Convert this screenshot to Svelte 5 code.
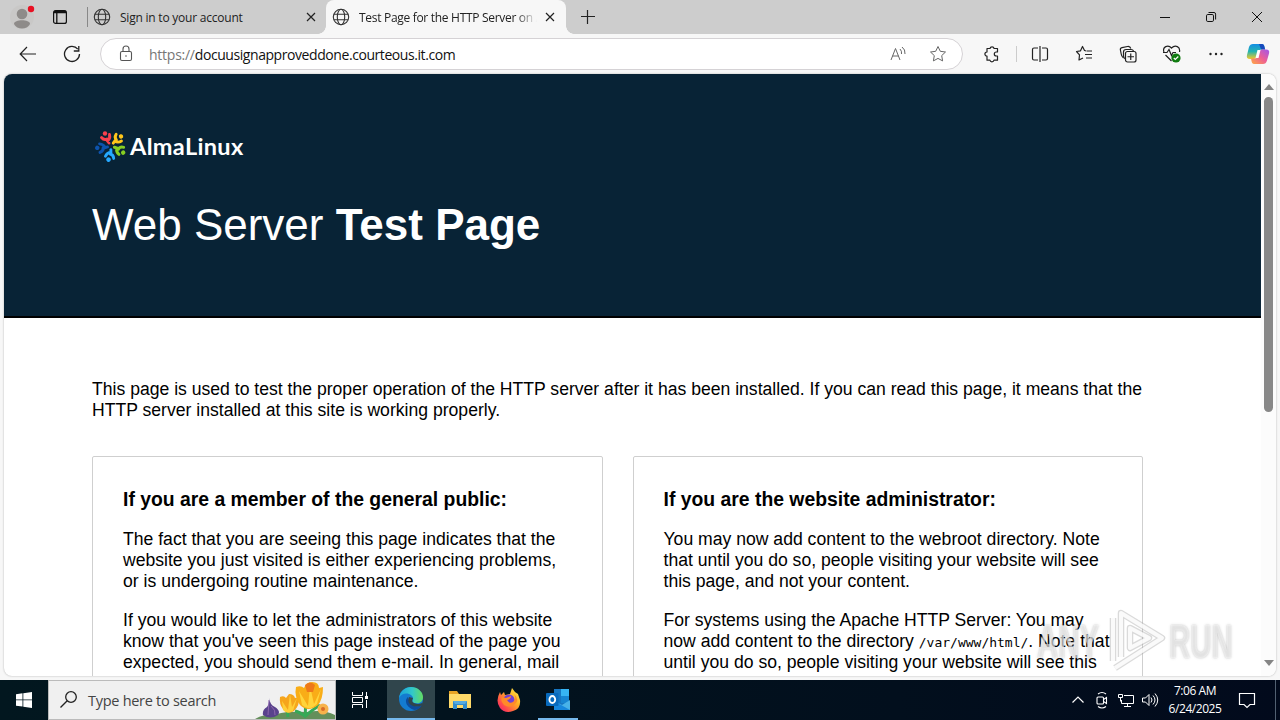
<script lang="ts">
	const tabs = [
		{ title: 'Sign in to your account', active: false },
		{ title: 'Test Page for the HTTP Server on AlmaLinux', active: true }
	];

	// One figure of the AlmaLinux mark, rotated around the centre
	const petals = [
		{ color: '#f7404d', angle: 0 },
		{ color: '#ffc61a', angle: 72 },
		{ color: '#86ce22', angle: 144 },
		{ color: '#25a8ff', angle: 216 },
		{ color: '#0d53ad', angle: 288 }
	];
</script>

<div class="screen">
	<header class="tab-strip">
		<svg class="profile" width="28" height="28" viewBox="0 0 28 28">
			<circle cx="14" cy="14" r="12" fill="#c9c8c7" />
			<circle cx="14" cy="11" r="5.3" fill="#8e8b89" />
			<path d="M6 21c0-5 16-5 16 0-3 6-13 6-16 0z" fill="#8e8b89" />
			<circle cx="23" cy="6" r="3.2" fill="#e81123" />
		</svg>
		<svg class="workspaces" width="16" height="16" viewBox="0 0 16 16" fill="none" stroke="#111">
			<rect x="1.6" y="1.6" width="12.8" height="12.8" rx="2" stroke-width="1.2" />
			<path d="M2 3h12" stroke-width="2.5" />
			<path d="M4.8 4v10" stroke-width="1.3" />
		</svg>
		<i class="strip-divider"></i>
		{#each tabs as tab}
			<div class="tab" class:active={tab.active}>
				<svg width="18" height="18" viewBox="0 0 18 18" fill="none" stroke="#333" stroke-width="1.1">
					<circle cx="9" cy="9" r="7.7" />
					<ellipse cx="9" cy="9" rx="3.7" ry="7.7" />
					<path d="M2 6.2h14M2 11.8h14" />
				</svg>
				<span class="tab-title">{tab.title}</span>
				<svg width="10" height="10" viewBox="0 0 10 10" stroke="#222" stroke-width="1.2">
					<path d="M1 1l8 8M9 1L1 9" />
				</svg>
			</div>
		{/each}
		<svg class="new-tab" width="14" height="14" viewBox="0 0 14 14" stroke="#222" stroke-width="1.2">
			<path d="M6.5 0v14M0 6.5h14" />
		</svg>
		<div class="window-buttons">
			<svg width="12" height="12" viewBox="0 0 12 12" stroke="#111"><path d="M1 6.5h10" /></svg>
			<svg width="12" height="12" viewBox="0 0 12 12" fill="none" stroke="#111">
				<rect x="1.5" y="3.5" width="7" height="7" rx="1.3" />
				<path d="M3.5 1.5H9a1.6 1.6 0 0 1 1.6 1.6V8.5" />
			</svg>
			<svg width="12" height="12" viewBox="0 0 12 12" stroke="#111"><path d="M1 1l10 10M11 1L1 11" /></svg>
		</div>
	</header>

	<div class="toolbar">
		<svg class="back" width="18" height="18" viewBox="0 0 18 18" fill="none" stroke="#222" stroke-width="1.2">
			<path d="M17 9H1.5M8 2L1.2 9 8 16" />
		</svg>
		<svg class="reload" width="18" height="18" viewBox="0 0 18 18" fill="none" stroke="#222" stroke-width="1.3">
			<path d="M16.5 9A7.5 7.5 0 1 1 14.8 4.2M15.8 1v5h-5" />
		</svg>
		<div class="address">
			<svg width="16" height="18" viewBox="0 0 16 18" fill="none" stroke="#555" stroke-width="1.1">
				<rect x="2.5" y="6.5" width="11" height="9" rx="1.5" />
				<path d="M5 6.5V4a3 3 0 0 1 6 0v2.5" />
				<circle cx="8" cy="11" r=".8" fill="#555" stroke="none" />
			</svg>
			<span class="url"><span>https://</span>docuusignapproveddone.courteous.it.com</span>
			<svg class="read" width="18" height="16" viewBox="0 0 18 16" fill="none" stroke="#666">
				<path d="M2 14L6.500 2.500 11 14M3.500 10h6M11 3q2 2 1.500 5M13 1q3.500 2.500 3 7" />
			</svg>
			<svg class="star" width="18" height="18" viewBox="0 0 18 18" fill="none" stroke="#666" stroke-linejoin="round">
				<path d="M9 1.5l2.3 4.8 5.2.7-3.8 3.6.9 5.3L9 13.4l-4.6 2.5.9-5.3L1.5 7l5.2-.7z" />
			</svg>
		</div>
		<div class="actions">
			<svg width="18" height="18" viewBox="0 0 18 18" fill="none" stroke="#222" stroke-width="1.2" stroke-linejoin="round">
				<path d="M4 3.5h3a2.1 2.1 0 0 1 4.1 0h3.4V7h-1.2a2 2 0 0 0 0 4h1.2v4.2H11a2.1 2.1 0 0 1-4.1 0H4v-4a2.1 2.1 0 0 1 0-4.2z" />
			</svg>
			<i class="tool-divider"></i>
			<svg width="18" height="18" viewBox="0 0 18 18" fill="none" stroke="#222" stroke-width="1.2">
				<path d="M7 3H3Q1.5 3 1.5 4.5v9Q1.5 15 3 15h4M11 3h4q1.5 0 1.5 1.5v9Q16.5 15 15 15h-4M9 1v16" />
			</svg>
			<svg width="18" height="18" viewBox="0 0 18 18" fill="none" stroke="#222" stroke-width="1.2" stroke-linejoin="round">
				<path d="M11 5.8L9.500 5.500 7.500 1.500 5.500 5.800 1.500 6.500 4.500 9.800 4 15l4-2M11.500 6H17M10 9.500h7M11 13h6" />
			</svg>
			<svg width="18" height="18" viewBox="0 0 18 18" fill="none" stroke="#222" stroke-width="1.2">
				<path d="M4.500 13Q2.500 11.500 2.200 9L1.400 5Q1 3 3 2.600L8.500 1.500Q11 1 11.800 3.500" />
				<path d="M6.500 14Q4.500 13 4.500 11V7Q4.500 4.500 7 4.500h5q2 0 2.500 1.500" />
				<rect x="6.500" y="6.500" width="10.500" height="10.500" rx="2" fill="#f7f7f7" />
				<path d="M11.750 8.500v6.500M8.500 11.750h6.500" />
			</svg>
			<svg width="18" height="20" viewBox="1 0 18 20" fill="none" stroke="#222" stroke-width="1.2">
				<path d="M2 8C0 3 6 0 9.500 4c4-4 9-1 8 4M3.500 11l6 6M1 8.500h4l2-3 2.500 6 1.500-3h3" />
				<circle cx="14" cy="14" r="4.600" fill="#107c10" stroke="none" />
				<path d="M11.800 14l1.500 1.500 3-3" stroke="#fff" />
			</svg>
			<svg width="18" height="16" viewBox="-1 0 18 16" fill="#222">
				<circle cx="2.500" cy="8" r="1.200" /><circle cx="8" cy="8" r="1.200" /><circle cx="13.500" cy="8" r="1.200" />
			</svg>
			<svg class="copilot" width="24" height="22" viewBox="0 0 24 22">
				<defs>
					<linearGradient id="cool" x1="0" y1="0" x2="0" y2="1">
						<stop offset="0" stop-color="#128de5" /><stop offset=".5" stop-color="#25b5b0" /><stop offset="1" stop-color="#f5c928" />
					</linearGradient>
					<linearGradient id="warm" x1="1" y1="0" x2="0" y2="1">
						<stop offset="0" stop-color="#a056ec" /><stop offset=".5" stop-color="#ee5f94" /><stop offset="1" stop-color="#ffab42" />
					</linearGradient>
				</defs>
				<path d="M7 1h9q2 0 2.500 3l.6 2.500h-4q-2 0-2.700 2.500l-1.200 4Q10.300 16 8 16H4Q0 16 1 12L3 4Q4 1 7 1z" fill="url(#cool)" />
				<path d="M13 1h3q2 0 2.500 3l.6 2.500h-4Z" fill="#174abc" />
				<path d="M17 21H8q-2 0-2.500-3L5 15.500h4q2 0 2.700-2.500l1.100-4Q13.700 6.500 16 6.500h4q4 0 3 4l-2 7Q20 21 17 21z" fill="url(#warm)" />
				<path d="M11.500 7h3l-2 8h-3z" fill="#fff" />
			</svg>
		</div>
	</div>

	<div class="viewport">
		<main class="page">
			<section class="hero">
				<div class="logo">
					<svg width="32" height="32" viewBox="0 0 32 32">
						{#each petals as petal}
							<g transform="rotate({petal.angle} 16 16)" stroke={petal.color} fill="none" stroke-linecap="round">
								<path d="M6.500 7.500q2.500 3 5.500 1.500M14.500 4.500q1 4-2 6.500l1.500 2" stroke-width="2.900" />
								<circle cx="10" cy="3.500" r="2.200" fill={petal.color} stroke="none" />
							</g>
						{/each}
					</svg>
					<span>AlmaLinux</span>
				</div>
				<h1>Web Server <strong>Test Page</strong></h1>
			</section>
			<section class="content">
				<p class="intro">
					This page is used to test the proper operation of the HTTP server after it has been installed. If you can read this page, it means that the<br />
					HTTP server installed at this site is working properly.
				</p>
				<div class="columns">
					<article>
						<h2>If you are a member of the general public:</h2>
						<p>
							The fact that you are seeing this page indicates that the<br />
							website you just visited is either experiencing problems,<br />
							or is undergoing routine maintenance.
						</p>
						<p>
							If you would like to let the administrators of this website<br />
							know that you've seen this page instead of the page you<br />
							expected, you should send them e-mail. In general, mail
						</p>
					</article>
					<article>
						<h2>If you are the website administrator:</h2>
						<p>
							You may now add content to the webroot directory. Note<br />
							that until you do so, people visiting your website will see<br />
							this page, and not your content.
						</p>
						<p>
							For systems using the Apache HTTP Server: You may<br />
							now add content to the directory <code>/var/www/html/</code>. Note that<br />
							until you do so, people visiting your website will see this
						</p>
					</article>
				</div>
			</section>
		</main>
		<div class="scrollbar">
			<svg width="10" height="6" viewBox="0 0 10 6"><path d="M5 0l5 6H0z" fill="#858585" /></svg>
			<i class="thumb"></i>
			<svg class="down" width="10" height="6" viewBox="0 0 10 6"><path d="M0 0h10L5 6z" fill="#858585" /></svg>
		</div>
	</div>

	<footer class="taskbar">
		<svg class="start" width="16" height="16" viewBox="0 0 16 16" fill="#fff">
			<path d="M0 2.200L6.500 1.300v6.200H0zM7.300 1.200L16 0v7.500H7.300zM0 8.300h6.500v6.300L0 13.700zM7.300 8.300H16V16l-8.700-1.200z" />
		</svg>
		<div class="search">
			<svg width="18" height="18" viewBox="0 0 18 18" fill="none" stroke="#222" stroke-width="1.300">
				<circle cx="11" cy="6" r="5.300" /><path d="M7.200 9.800L.5 16.500" />
			</svg>
			<span>Type here to search</span>
			<svg class="flowers" width="80" height="38" viewBox="0 0 80 38">
				<path d="M0 38Q8 33 22 33q10-3 30-2 16-3 28 3v4z" fill="#648f5b" />
				<path d="M33 36q-1-8-2-16M51 36q-2-10 2-20M49 36q8-7 16-12M51 36q-6-5-11-6" fill="none" stroke="#36a957" stroke-width="3" />
				<path d="M14 17q1 7 6 9 6 4 3 8-8 5-15 0-1-5 4-8 3-3 2-9z" fill="#59428c" />
				<path d="M14 19l-1 15M16 25q5 4 4 9" stroke="#8d67ae" fill="none" />
				<path d="M25 16q4-2 6 1l3-4q5 0 6 4l4-1q1 8-5 14-7 4-11-2-4-5-3-12z" fill="#f6a51c" />
				<path d="M27 20l6 9 2-16 2 13 5-9-4 13q-6 4-10-1z" fill="#ffcf38" />
				<path d="M41 6q5-2 8 1 2-6 8-6 7 0 7 6l4-1q0 12-5 18-10 8-18 0-6-9-4-18z" fill="#f9ad17" />
				<path d="M44 10l9 15 2-20 4 18 7-15-4 15q-8 8-15 1z" fill="#ffd43b" />
				<path d="M50 4q5-5 10 0l-2 7h-6z" fill="#ee791a" />
				<circle cx="68" cy="28" r="5.500" fill="#f7b24b" /><circle cx="68" cy="28" r="2" fill="#d86c28" />
			</svg>
		</div>
		<div class="task-view">
			<svg width="18" height="18" viewBox="0 0 18 18" fill="none" stroke="#fff">
				<path d="M1.500 1v3.500h10V1M1.500 17v-3.500h10V17M1.500 6.500h10v5h-10zM15.500 1v4M15.500 9v8" />
				<path d="M14 5h3v3h-3z" fill="#fff" stroke="none" />
			</svg>
		</div>
		<div class="task current">
			<svg width="24" height="24" viewBox="0 0 24 24">
				<defs><linearGradient id="edge" x1="0" y1="0" x2="1" y2="0"><stop stop-color="#1aa2db" /><stop offset=".55" stop-color="#32c8ca" /><stop offset="1" stop-color="#64dc60" /></linearGradient></defs>
				<circle cx="12" cy="12" r="12" fill="#147bd0" />
				<path d="M0 11C1 4 6 0 12 0c7 0 12 5 12 10 0 5-4 7-7 6-4 0-4-2-3-4C15 7 4 3 0 11z" fill="url(#edge)" />
				<path d="M9 10C4 14 9 22 16 23c3 0 6-3 7-5-5 3-12 1-14-8z" fill="#0c4c9d" />
				<path d="M14 11q-2 4 1 5 4 2 8 0l1 2q-7 3-12 0-4-3-2-8z" fill="#30454c" />
			</svg>
		</div>
		<div class="task">
			<svg width="22" height="20" viewBox="0 0 22 20">
				<path d="M0 1h8l2 3h12v14H0z" fill="#e8a425" /><path d="M0 4h22v14H0z" fill="#ffda69" />
				<path d="M4 11h14v8h-4v-4H8v4H4z" fill="#338dcd" /><path d="M4 11h14l-2 3H6z" fill="#56abe1" />
			</svg>
		</div>
		<div class="task">
			<svg width="24" height="24" viewBox="0 0 24 24">
				<defs><linearGradient id="fox" x1="1" y1="0" x2="0" y2="1"><stop stop-color="#fff44f" /><stop offset=".4" stop-color="#ffad24" /><stop offset=".75" stop-color="#ff494d" /><stop offset="1" stop-color="#e7157f" /></linearGradient></defs>
				<path d="M3 4l1 3 3-3 1 3 5-1 2-6 3 4 3 2 2 6q1 9-7 11-8 3-13-3-5-7 0-16z" fill="url(#fox)" />
				<circle cx="12" cy="12" r="5.500" fill="#7141d5" />
				<path d="M5 9l4 1 5-2q0 3-4 4 2 4 6 2 4-3 1-8 6 6 1 10-5 5-11 1-4-4-2-8z" fill="#ff8b28" />
			</svg>
		</div>
		<div class="task running">
			<svg width="25" height="23" viewBox="0 0 25 23">
				<path d="M8 1h15v20H8z" fill="#1676c2" /><path d="M15 1h8v7h-8z" fill="#36b4f3" /><path d="M15 8h8v7h-8z" fill="#1685d2" /><path d="M8 13l8 4 8-5v10H8z" fill="#48b2e8" /><path d="M8 13l16 9H8z" fill="#1687dd" />
				<rect y="5" width="12.500" height="13" rx="1" fill="#086abd" /><ellipse cx="6.300" cy="11.500" rx="2.900" ry="3.500" fill="none" stroke="#fff" stroke-width="1.800" />
			</svg>
		</div>
		<div class="tray">
			<svg width="14" height="10" viewBox="0 0 14 10" fill="none" stroke="#fff" stroke-width="1.200"><path d="M1.500 7.500L7 2l5.500 5.500" /></svg>
			<svg width="14" height="18" viewBox="0 0 14 18" fill="none" stroke="#fff" stroke-width="1.100">
				<rect x="2" y="6" width="6.500" height="7" rx="1" /><path d="M8.500 8.500l3-2v6l-3-2M3 3q4-3 8 0M3 15.500q4 3 8 0" />
			</svg>
			<svg width="18" height="16" viewBox="0 0 18 16" fill="none" stroke="#fff">
				<path d="M7 3.500h9.500v8H4.500V8M7 14.500h7M10.500 11.500v3M1.500 2.500h4v3h-4zM3.500 5.500v4" />
			</svg>
			<svg width="18" height="16" viewBox="0 0 18 16" fill="none" stroke="#fff">
				<path d="M1.500 6h3L8 2.500v11L4.500 10h-3zM10 5.500q2 2.500 0 5M12 3.500q4 4.500 0 9M14 1.500q5.500 6.500 0 13" />
			</svg>
			<div class="clock"><span>7:06 AM</span><span>6/24/2025</span></div>
			<svg class="notify" width="18" height="18" viewBox="0 0 18 18" fill="none" stroke="#fff" stroke-width="1.200">
				<path d="M1.500 2.500h15v11H12l-3 3-3-3H1.500z" />
			</svg>
			<i class="show-desktop"></i>
		</div>
	</footer>

	<!-- Translucent recorder badge floating above the desktop -->
	<div class="watermark">
		<span>ANY</span>
		<svg width="60" height="68" viewBox="0 0 60 68" fill="none" stroke-linejoin="round">
			<path d="M6 54V11M14 50V6L55 31 8 61M23 41V21l19 10z" stroke="#999" stroke-opacity=".36" stroke-width="6.500" />
			<path d="M6 54V11M14 50V6L55 31 8 61M23 41V21l19 10z" stroke="#fff" stroke-opacity=".85" stroke-width="4" />
		</svg>
		<span>RUN</span>
	</div>
</div>

<style>
	:global(body) {
		margin: 0;
		overflow: hidden;
	}

	.screen {
		position: relative;
		display: flex;
		flex-direction: column;
		width: 1280px;
		height: 720px;
		background: #f7f7f7;
		font-family: 'Open Sans', 'Noto Sans', sans-serif;
		overflow: hidden;
	}

	svg {
		display: block;
		flex: none;
	}

	.tab-strip {
		display: flex;
		align-items: center;
		height: 34px;
		background: #cdcdcd;
	}

	.profile {
		margin-left: 8px;
	}

	.workspaces {
		margin-left: 16px;
	}

	.strip-divider {
		width: 1px;
		height: 20px;
		margin-left: 19px;
		background: #888;
	}

	.tab {
		display: flex;
		align-items: center;
		box-sizing: border-box;
		width: 238px;
		height: 34px;
		padding: 0 10px 0 5px;
		color: #222;
		font-size: 12px;
	}

	.tab.active {
		position: relative;
		width: 240px;
		padding: 0 11px 0 6px;
		background: #f7f7f7;
		border-radius: 8px 8px 0 0;
	}

	.tab.active::before,
	.tab.active::after {
		content: '';
		position: absolute;
		bottom: 0;
		width: 8px;
		height: 8px;
	}

	.tab.active::before {
		left: -8px;
		background: radial-gradient(circle at 0 0, #cdcdcd 7.5px, #f7f7f7 8px);
	}

	.tab.active::after {
		right: -8px;
		background: radial-gradient(circle at 100% 0, #cdcdcd 7.5px, #f7f7f7 8px);
	}

	.tab-title {
		flex: 1;
		margin: 0 8px 0 9px;
		overflow: hidden;
		white-space: nowrap;
		letter-spacing: -0.22px;
	}

	.active .tab-title {
		letter-spacing: -0.3px;
		mask-image: linear-gradient(to right, #000 88%, transparent);
	}

	.new-tab {
		margin-left: 15px;
	}

	.window-buttons {
		display: flex;
		gap: 34px;
		margin-left: auto;
		padding-right: 17px;
	}

	.toolbar {
		display: flex;
		align-items: center;
		height: 40px;
	}

	.back {
		margin-left: 19px;
	}

	.reload {
		margin-left: 26px;
	}

	.address {
		display: flex;
		align-items: center;
		box-sizing: border-box;
		width: 863px;
		height: 32px;
		margin-left: 19px;
		padding: 0 15px 0 17px;
		border: 1px solid #d5d2d5;
		border-radius: 16px;
		background: #fff;
	}

	.url {
		margin-left: 15px;
		color: #111;
		font-size: 14px;
		letter-spacing: -0.43px;
	}

	.url span {
		color: #777;
		letter-spacing: -0.25px;
	}

	.read {
		margin-left: auto;
	}

	.star {
		margin-left: 22px;
	}

	.actions {
		display: flex;
		align-items: center;
		gap: 26px;
		padding-left: 20px;
	}

	.tool-divider {
		width: 1px;
		height: 16px;
		margin: 0 -12px 0 -11px;
		background: #ccc;
	}

	.copilot {
		margin-left: -5px;
	}

	.viewport {
		display: flex;
		box-sizing: border-box;
		height: 602px;
		margin: 0 4px;
		border-radius: 8px;
		background: #fff;
		box-shadow: 0 0 2px #aaa;
		overflow: hidden;
	}

	.page {
		width: 1257px;
		color: #000;
		font: 17.6px/21px 'Liberation Sans', Arial, sans-serif;
	}

	.hero {
		box-sizing: border-box;
		height: 244px;
		padding: 56px 88px 0;
		border-bottom: 2px solid #000;
		background: #082336;
		color: #fff;
	}

	.logo {
		display: flex;
		align-items: center;
		height: 32px;
		margin-left: 3px;
		font: bold 23.5px/32px Lato, sans-serif;
	}

	.logo span {
		margin-left: 3px;
		letter-spacing: 0.35px;
	}

	h1 {
		margin: 37px 0 0;
		font-size: 44px;
		font-weight: 400;
		line-height: 52px;
		white-space: nowrap;
	}

	.content {
		padding: 61px 88px 0;
	}

	p {
		margin: 0 0 18px;
		white-space: nowrap;
	}

	.intro {
		margin-bottom: 35px;
	}

	.columns {
		display: grid;
		grid-template-columns: 1fr 1fr;
		gap: 30px;
		width: 1051px;
	}

	article {
		box-sizing: border-box;
		height: 300px;
		padding: 30px;
		border: 1px solid #cfcfcf;
		border-radius: 2px;
	}

	h2 {
		margin: 0 0 18px;
		font-size: 19.36px;
		line-height: 24px;
		white-space: nowrap;
	}

	code {
		font: 13px 'DejaVu Sans Mono', monospace;
	}

	.scrollbar {
		display: flex;
		flex-direction: column;
		align-items: center;
		width: 15px;
		padding: 10px 0;
		background: #fcfcfc;
	}

	.thumb {
		width: 9px;
		height: 315px;
		margin-top: 7px;
		border-radius: 5px;
		background: #888;
	}

	.down {
		margin-top: auto;
	}

	.taskbar {
		display: flex;
		align-items: center;
		height: 40px;
		margin-top: 4px;
		background: linear-gradient(to right, #02171f, #020f1d 70%, #020a1c);
	}

	.start {
		margin: 0 16px;
	}

	.search {
		display: flex;
		align-items: center;
		box-sizing: border-box;
		width: 288px;
		height: 40px;
		padding-left: 11px;
		border: 1px solid #bbb;
		background: #f0f0f0;
		color: #444;
		font-size: 14.5px;
		letter-spacing: -0.28px;
		white-space: nowrap;
	}

	.search span {
		margin-left: 10px;
	}

	.flowers {
		margin-left: auto;
	}

	.task-view,
	.task {
		display: flex;
		align-items: center;
		justify-content: center;
		box-sizing: border-box;
		width: 49px;
		height: 40px;
	}

	.task-view {
		width: 51px;
		padding-right: 3px;
	}

	.current {
		width: 48px;
		border-bottom: 2px solid #76b9ed;
		background: #30454c;
	}

	.running {
		width: 40px;
		margin-left: 5px;
		border-bottom: 2px solid #76b9ed;
	}

	.tray {
		display: flex;
		align-items: center;
		height: 40px;
		margin-left: auto;
		color: #fff;
	}

	.tray > svg {
		margin-right: 10px;
	}

	.tray > svg:nth-of-type(2) {
		margin-right: 8px;
	}

	.tray > svg:nth-of-type(3) {
		margin-right: 6px;
	}

	.clock {
		display: flex;
		flex-direction: column;
		align-items: center;
		width: 54px;
		margin-left: -1px;
		font-size: 12px;
		line-height: 18px;
		letter-spacing: -0.45px;
		white-space: nowrap;
	}

	.tray .notify {
		margin: 0 19px 0 16px;
	}

	.show-desktop {
		width: 4px;
		height: 40px;
		border-left: 1px solid #526071;
	}

	.watermark {
		position: absolute;
		left: 1037px;
		top: 607px;
		display: flex;
		align-items: center;
		height: 68px;
		color: rgba(255, 255, 255, 0.55);
		font: bold 49px 'Liberation Sans', sans-serif;
		text-shadow: 0 0 3px rgba(110, 110, 110, 0.45);
	}

	.watermark span {
		width: 70px;
		transform: scaleX(0.6);
		transform-origin: left;
	}

	.watermark span:last-child {
		margin-left: 2px;
	}
</style>
